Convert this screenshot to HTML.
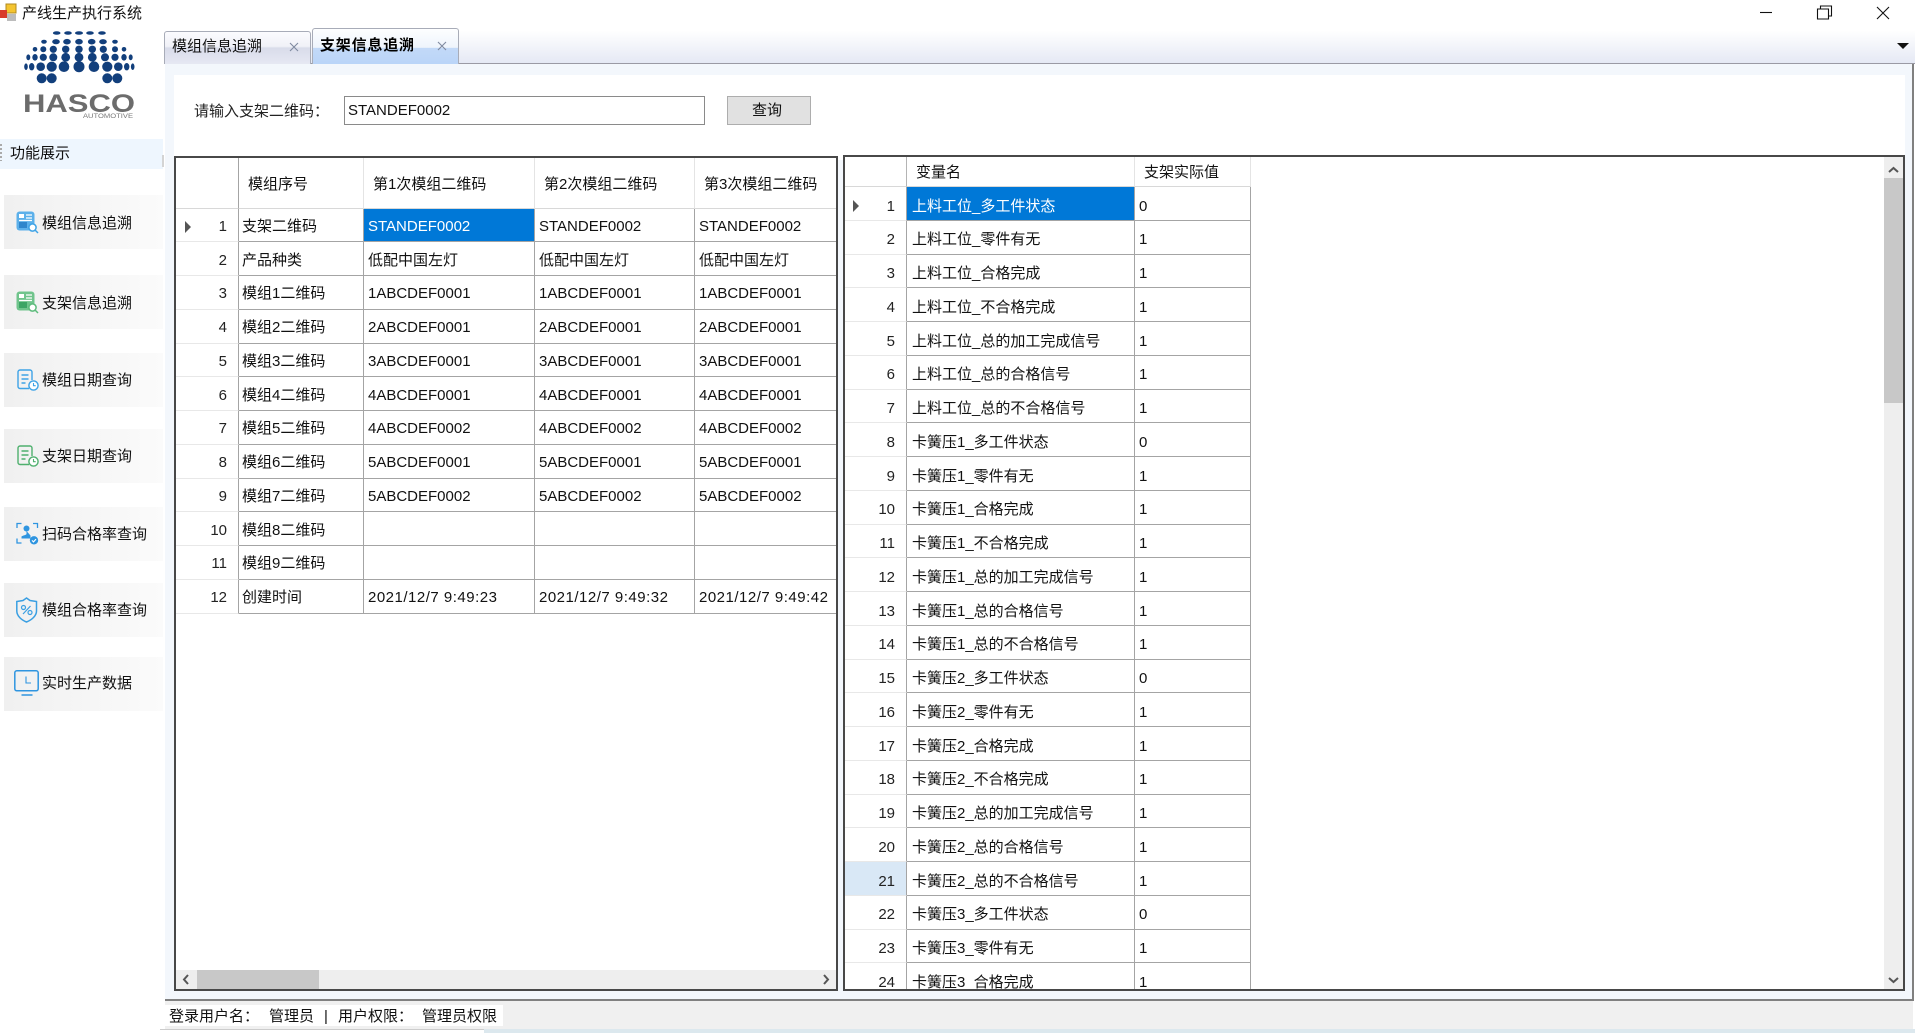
<!DOCTYPE html>
<html lang="zh"><head><meta charset="utf-8"><title>产线生产执行系统</title>
<style>
html,body{margin:0;padding:0;background:#fff;width:1915px;height:1033px;overflow:hidden}
#p{position:absolute;left:0;top:0;width:1915px;height:1033px;overflow:hidden;background:#fff;filter:blur(.35px);font:15px/20px "Liberation Sans","Noto Sans CJK SC",sans-serif;color:#111}
.a{position:absolute;white-space:nowrap}
.btn{position:absolute;left:4px;width:159px;height:54px;background:linear-gradient(90deg,#f0f0f0,#fbfbfb)}
.bt{position:absolute;left:42px;white-space:nowrap;color:#111}
.g{position:absolute;box-sizing:border-box;border:2px solid #484848;background:#fff;overflow:hidden}
.r{display:flex;box-sizing:border-box;height:33.76px;align-items:stretch}
.r>*{box-sizing:border-box;display:block;font-style:normal;font-weight:normal;flex:none;line-height:31px;white-space:nowrap;overflow:hidden;border-right:1px solid #a4a4a4;border-bottom:1px solid #a4a4a4}
.r>b{text-align:right;padding-right:11px;border-bottom-color:#e8e8e8;position:relative;background:#fff;color:#222}
.l>*{padding-top:2.4px}.q>*{padding-top:3.5px}
.q>b{padding-right:11px}
.l b{width:63px}.l i:nth-child(2){width:125px;padding-left:3px}.l i:nth-child(3){width:171px;padding-left:4px}.l i:nth-child(4){width:160px;padding-left:4px}.l i:nth-child(5){width:200px;padding-left:4px;border-right:0}
.q b{width:62px}.q i:nth-child(2){width:228px;padding-left:5px}.q i:nth-child(3){width:116px;padding-left:4px}
.s{background:#0078d7;color:#fff}
.dt i:nth-child(n+3){letter-spacing:.5px}
.h>*{border-bottom-color:#d8d8d8;border-right-color:#e4e4e4}
.l.h{height:50.5px}.l.h>*{line-height:49px;padding-top:2.4px}.l.h i:nth-child(2){padding-left:9px}.l.h i:nth-child(3),.l.h i:nth-child(4),.l.h i:nth-child(5){padding-left:9px}
.l.h b{border-right-color:#a4a4a4;border-bottom-color:#d8d8d8}
.q.h{height:30px}.q.h>*{line-height:28px;padding-top:2.4px}.q.h i:nth-child(2),.q.h i:nth-child(3){padding-left:9px}
.q.h b{border-right-color:#b4b4b4;border-bottom-color:#d8d8d8}
.tri{position:absolute;left:9px;top:12px;width:0;height:0;border-left:6px solid #555;border-top:6px solid transparent;border-bottom:6px solid transparent}
.q .tri{top:13px;left:8px}
svg{position:absolute;overflow:visible}
</style></head><body><div id="p">

<!-- title bar -->
<svg style="left:0;top:0" width="20" height="24" viewBox="0 0 20 24"><rect x="6" y="4" width="10" height="9" fill="#f4c430" stroke="#b08a20"/><rect x="7" y="14" width="9" height="7" fill="#bcbcbc"/><rect x="0" y="10" width="7" height="8" fill="#d83a2a"/></svg>
<div class="a" style="left:22px;top:4px;color:#111">产线生产执行系统</div>
<svg style="left:1755px;top:0" width="150" height="26" viewBox="0 0 150 26" fill="none" stroke="#111" stroke-width="1.1"><path d="M5 12.5H17"/><path d="M62.500 11h11v10h-11zM65.500 11V8h11v10h-3" transform="translate(0,-2)"/><path d="M122 7L134 19M134 7L122 19"/></svg>

<!-- logo -->
<svg style="left:0;top:0" width="165" height="125" viewBox="0 0 165 125" fill="#123f7c">
<ellipse cx="56.7" cy="33" rx="3.8" ry="1.8"/><ellipse cx="68" cy="33" rx="3.8" ry="1.8"/><ellipse cx="79" cy="33" rx="4" ry="1.8"/><ellipse cx="90" cy="33" rx="3.8" ry="1.8"/><ellipse cx="102" cy="33" rx="3.8" ry="1.8"/>
<ellipse cx="44" cy="41.7" rx="2.8" ry="2"/><ellipse cx="56" cy="41.7" rx="3.8" ry="2.6"/><ellipse cx="67" cy="41.7" rx="3.8" ry="2.8"/><ellipse cx="79" cy="41.7" rx="3.8" ry="2.8"/><ellipse cx="91.7" cy="41.7" rx="3.8" ry="2.8"/><ellipse cx="103" cy="41.7" rx="3.8" ry="2.6"/><ellipse cx="115" cy="41.7" rx="2.8" ry="2"/>
<circle cx="35" cy="49.3" r="2.3"/><circle cx="43.3" cy="49.3" r="3"/><circle cx="53.3" cy="49.3" r="3.6"/><circle cx="65.7" cy="49.3" r="3.7"/><circle cx="79" cy="49.3" r="3.7"/><circle cx="92.3" cy="49.3" r="3.7"/><circle cx="103.3" cy="49.3" r="3.6"/><circle cx="115" cy="49.3" r="3"/><circle cx="124" cy="49.3" r="2.3"/>
<ellipse cx="28.3" cy="57.3" rx="2" ry="2.9"/><ellipse cx="35" cy="57.3" rx="2.7" ry="3.3"/><circle cx="43.3" cy="57.3" r="3.6"/><circle cx="53.3" cy="57.3" r="4"/><circle cx="65.7" cy="57.3" r="4.4"/><circle cx="79" cy="57.3" r="4.4"/><circle cx="92.3" cy="57.3" r="4.4"/><circle cx="105" cy="57.3" r="4"/><circle cx="115" cy="57.3" r="3.6"/><ellipse cx="124" cy="57.3" rx="2.7" ry="3.3"/><ellipse cx="130.7" cy="57.3" rx="2" ry="2.9"/>
<ellipse cx="26" cy="66.7" rx="1.8" ry="3.3"/><ellipse cx="31.7" cy="66.7" rx="2.7" ry="3.7"/><circle cx="40.7" cy="66.7" r="4.3"/><circle cx="51.7" cy="66.7" r="5.1"/><circle cx="64" cy="66.7" r="5.3"/><circle cx="79" cy="66.7" r="5.5"/><circle cx="94" cy="66.7" r="5.3"/><circle cx="107.3" cy="66.7" r="5.1"/><circle cx="118.3" cy="66.7" r="4.3"/><ellipse cx="126.7" cy="66.7" rx="2.7" ry="3.7"/><ellipse cx="132.7" cy="66.7" rx="1.8" ry="3.3"/>
<circle cx="41.7" cy="78.3" r="5"/><circle cx="51.7" cy="78.3" r="5"/><circle cx="107.3" cy="78.3" r="5"/><circle cx="117.3" cy="78.3" r="5"/>
<text x="23" y="112" font-family="Liberation Sans" font-weight="bold" font-size="25" fill="#6c6c6c" textLength="112" lengthAdjust="spacingAndGlyphs">HASCO</text>
<text x="83" y="118" font-family="Liberation Sans" font-size="6" fill="#777" textLength="50" lengthAdjust="spacingAndGlyphs">AUTOMOTIVE</text>
</svg>

<!-- side menu -->
<div style="position:absolute;left:0;top:139px;width:163px;height:30px;background:#eef6fe"></div>
<div style="position:absolute;left:0;top:144px;width:2px;height:17px;background:repeating-linear-gradient(180deg,#aaa 0 2px,transparent 2px 4px)"></div>
<div style="position:absolute;left:162px;top:155px;width:2px;height:12px;background:#d4d4d4"></div>
<div class="a" style="left:10px;top:144px">功能展示</div>

<div class="btn" style="top:195px"></div><div class="bt" style="top:214px">模组信息追溯</div>
<div class="btn" style="top:275px"></div><div class="bt" style="top:294px">支架信息追溯</div>
<div class="btn" style="top:353px"></div><div class="bt" style="top:371px">模组日期查询</div>
<div class="btn" style="top:429px"></div><div class="bt" style="top:447px">支架日期查询</div>
<div class="btn" style="top:507px"></div><div class="bt" style="top:525px">扫码合格率查询</div>
<div class="btn" style="top:583px"></div><div class="bt" style="top:601px">模组合格率查询</div>
<div class="btn" style="top:657px"></div><div class="bt" style="top:674px">实时生产数据</div>

<svg style="left:16px;top:211px" width="23" height="23" viewBox="0 0 23 23"><rect x=".5" y=".5" width="18" height="19" rx="3" fill="#5cb0ea"/><rect x="3" y="3" width="5" height="4" fill="#fff"/><path d="M10 4h6M10 7h6M3 9.5h13" stroke="#fff" stroke-width="1.2"/><rect x="3" y="11" width="8" height="6" fill="#2f86cc"/><circle cx="16.5" cy="16.5" r="3.6" fill="#fff" stroke="#3ea3e6" stroke-width="1.5"/><path d="M19 19l3 3" stroke="#3ea3e6" stroke-width="1.5"/></svg>
<svg style="left:16px;top:291px" width="23" height="23" viewBox="0 0 23 23"><rect x=".5" y=".5" width="18" height="19" rx="3" fill="#70c48c"/><rect x="3" y="3" width="5" height="4" fill="#fff"/><path d="M10 4h6M10 7h6M3 9.5h13" stroke="#fff" stroke-width="1.2"/><rect x="3" y="11" width="8" height="6" fill="#3da565"/><circle cx="16.5" cy="16.5" r="3.6" fill="#fff" stroke="#5dbb7c" stroke-width="1.5"/><path d="M19 19l3 3" stroke="#5dbb7c" stroke-width="1.5"/></svg>
<svg style="left:17px;top:369px" width="22" height="22" viewBox="0 0 22 22" fill="none" stroke="#3ea3e6" stroke-width="1.4"><path d="M12 19.5H3a2 2 0 0 1-2-2V3a2 2 0 0 1 2-2h10a2 2 0 0 1 2 2v8"/><path d="M4.5 6h7M4.5 10h7M4.5 14h4"/><circle cx="16.5" cy="16.5" r="4.6" fill="#fff"/><path d="M16.5 14v2.7h2.2" stroke-width="1.1"/></svg>
<svg style="left:17px;top:445px" width="22" height="22" viewBox="0 0 22 22" fill="none" stroke="#4fb06e" stroke-width="1.4"><path d="M12 19.5H3a2 2 0 0 1-2-2V3a2 2 0 0 1 2-2h10a2 2 0 0 1 2 2v8"/><path d="M4.5 6h7M4.5 10h7M4.5 14h4"/><circle cx="16.5" cy="16.5" r="4.6" fill="#fff"/><path d="M16.5 14v2.7h2.2" stroke-width="1.1"/></svg>
<svg style="left:16px;top:522px" width="23" height="23" viewBox="0 0 23 23" fill="none" stroke="#2f95e0" stroke-width="1.3"><path d="M1 6V1.5h4.5M17 1.5h4.5V6M1 16.5V21h4.5"/><circle cx="10.5" cy="6.5" r="3" fill="#2f95e0" stroke="none"/><path d="M10.5 9v3c0 1-4 1.5-5 2.5v2h9v-3" fill="#2f95e0" stroke="none"/><circle cx="18" cy="18.3" r="4.2" fill="#2f95e0" stroke="none"/><path d="M16 18.4l1.5 1.5 2.5-2.8" stroke="#fff" stroke-width="1.1"/></svg>
<svg style="left:16px;top:597px" width="22" height="26" viewBox="0 0 22 26" fill="none" stroke="#3a9fe2" stroke-width="1.5"><path d="M10.5 1L14 3.500 20.500 4.500V14c0 5-5 9-10 11C5.500 23 .8 19 .8 14V4.500L7 3.500z"/><path d="M7 17L14.500 9" stroke-width="1.2"/><circle cx="7.500" cy="10.500" r="2" stroke-width="1.200"/><circle cx="14" cy="15.500" r="2" stroke-width="1.200"/></svg>
<svg style="left:14px;top:670px" width="25" height="26" viewBox="0 0 25 26" fill="none" stroke="#2f95e0" stroke-width="1.5"><rect x=".8" y=".8" width="23.400" height="20" rx="2"/><path d="M12 6.500v6.500h5" stroke-width="1.100"/><path d="M7.500 25h11"/></svg>

<!-- tab strip -->
<div style="position:absolute;left:165px;top:30px;width:1750px;height:34px;background:linear-gradient(180deg,#fff,#e4e8f4)"></div>
<div style="position:absolute;left:165px;top:63px;width:1750px;height:1px;background:#9a9aa4"></div>
<div style="position:absolute;box-sizing:border-box;left:164px;top:31px;width:147px;height:33px;border:1px solid #a8acb8;border-bottom:0;border-radius:3px 3px 0 0;background:linear-gradient(180deg,#fbfbfe 0,#f0f1f7 45%,#d9dcea 50%,#e6e8f3 100%)"></div>
<div style="position:absolute;box-sizing:border-box;left:312px;top:28px;width:147px;height:38px;border:1px solid #a8acb8;border-bottom:0;border-radius:3px 3px 0 0;background:linear-gradient(180deg,#fdfeff 0,#eef4fc 50%,#c2d9f8 52%,#b9d4f8 100%)"></div>
<div class="a" style="left:172px;top:37px;color:#111">模组信息追溯</div>
<div class="a" style="left:320px;top:36px;color:#000;font-weight:bold;letter-spacing:.8px">支架信息追溯</div>
<svg style="left:288px;top:40px" width="170" height="14" viewBox="0 0 170 14" fill="none" stroke="#7f8aa0" stroke-width="1.1"><path d="M2 3l8 8M10 3L2 11"/><path d="M150 2l8 8M158 2l-8 8"/></svg>
<div style="position:absolute;left:1897px;top:43px;width:0;height:0;border-left:6px solid transparent;border-right:6px solid transparent;border-top:6px solid #111"></div>

<!-- tab panel -->
<div style="position:absolute;left:165px;top:64px;width:1749px;height:937px;background:#f3f7fc"></div>
<div style="position:absolute;left:1912px;top:64px;width:2px;height:937px;background:#808080"></div>
<div style="position:absolute;left:165px;top:999px;width:1749px;height:2px;background:#808080"></div>
<div style="position:absolute;left:174px;top:75px;width:1731px;height:85px;background:#fff"></div>

<div class="a" style="left:194px;top:102px;color:#222">请输入支架二维码：</div>
<div class="a" style="left:344px;top:96px;width:361px;height:29px;box-sizing:border-box;border:1px solid #8a8a8a;background:#fff;padding-left:3px;line-height:27px">STANDEF0002</div>
<div class="a" style="left:727px;top:96px;width:84px;height:29px;box-sizing:border-box;border:1px solid #adadad;background:#e1e1e1;text-align:center;line-height:27px;padding-right:4px">查询</div>

<!-- left grid -->
<div class="g" style="left:174px;top:156px;width:664px;height:835px">
<div class="r l h"><b></b><i>模组序号</i><i>第1次模组二维码</i><i>第2次模组二维码</i><i>第3次模组二维码</i></div>
<div class="r l"><b>1<span class="tri"></span></b><i>支架二维码</i><i class="s">STANDEF0002</i><i>STANDEF0002</i><i>STANDEF0002</i></div>
<div class="r l"><b>2</b><i>产品种类</i><i>低配中国左灯</i><i>低配中国左灯</i><i>低配中国左灯</i></div>
<div class="r l"><b>3</b><i>模组1二维码</i><i>1ABCDEF0001</i><i>1ABCDEF0001</i><i>1ABCDEF0001</i></div>
<div class="r l"><b>4</b><i>模组2二维码</i><i>2ABCDEF0001</i><i>2ABCDEF0001</i><i>2ABCDEF0001</i></div>
<div class="r l"><b>5</b><i>模组3二维码</i><i>3ABCDEF0001</i><i>3ABCDEF0001</i><i>3ABCDEF0001</i></div>
<div class="r l"><b>6</b><i>模组4二维码</i><i>4ABCDEF0001</i><i>4ABCDEF0001</i><i>4ABCDEF0001</i></div>
<div class="r l"><b>7</b><i>模组5二维码</i><i>4ABCDEF0002</i><i>4ABCDEF0002</i><i>4ABCDEF0002</i></div>
<div class="r l"><b>8</b><i>模组6二维码</i><i>5ABCDEF0001</i><i>5ABCDEF0001</i><i>5ABCDEF0001</i></div>
<div class="r l"><b>9</b><i>模组7二维码</i><i>5ABCDEF0002</i><i>5ABCDEF0002</i><i>5ABCDEF0002</i></div>
<div class="r l"><b>10</b><i>模组8二维码</i><i></i><i></i><i></i></div>
<div class="r l"><b>11</b><i>模组9二维码</i><i></i><i></i><i></i></div>
<div class="r l dt"><b>12</b><i>创建时间</i><i>2021/12/7 9:49:23</i><i>2021/12/7 9:49:32</i><i>2021/12/7 9:49:42</i></div>
<div style="position:absolute;left:0;bottom:0;width:660px;height:19px;background:#eee"></div>
<div style="position:absolute;left:21px;bottom:0;width:122px;height:19px;background:#c8c8c8"></div>
<svg style="left:0;bottom:0" width="660" height="19" viewBox="0 0 660 19" fill="none" stroke="#555" stroke-width="2"><path d="M12 5l-4 4.500 4 4.500"/><path d="M648 5l4 4.500-4 4.500"/></svg>
</div>

<!-- right grid -->
<div class="g" style="left:843px;top:155px;width:1062px;height:836px">
<div class="r q h"><b></b><i>变量名</i><i>支架实际值</i></div>
<div class="r q"><b>1<span class="tri"></span></b><i class="s">上料工位_多工件状态</i><i>0</i></div>
<div class="r q"><b>2</b><i>上料工位_零件有无</i><i>1</i></div>
<div class="r q"><b>3</b><i>上料工位_合格完成</i><i>1</i></div>
<div class="r q"><b>4</b><i>上料工位_不合格完成</i><i>1</i></div>
<div class="r q"><b>5</b><i>上料工位_总的加工完成信号</i><i>1</i></div>
<div class="r q"><b>6</b><i>上料工位_总的合格信号</i><i>1</i></div>
<div class="r q"><b>7</b><i>上料工位_总的不合格信号</i><i>1</i></div>
<div class="r q"><b>8</b><i>卡簧压1_多工件状态</i><i>0</i></div>
<div class="r q"><b>9</b><i>卡簧压1_零件有无</i><i>1</i></div>
<div class="r q"><b>10</b><i>卡簧压1_合格完成</i><i>1</i></div>
<div class="r q"><b>11</b><i>卡簧压1_不合格完成</i><i>1</i></div>
<div class="r q"><b>12</b><i>卡簧压1_总的加工完成信号</i><i>1</i></div>
<div class="r q"><b>13</b><i>卡簧压1_总的合格信号</i><i>1</i></div>
<div class="r q"><b>14</b><i>卡簧压1_总的不合格信号</i><i>1</i></div>
<div class="r q"><b>15</b><i>卡簧压2_多工件状态</i><i>0</i></div>
<div class="r q"><b>16</b><i>卡簧压2_零件有无</i><i>1</i></div>
<div class="r q"><b>17</b><i>卡簧压2_合格完成</i><i>1</i></div>
<div class="r q"><b>18</b><i>卡簧压2_不合格完成</i><i>1</i></div>
<div class="r q"><b>19</b><i>卡簧压2_总的加工完成信号</i><i>1</i></div>
<div class="r q"><b>20</b><i>卡簧压2_总的合格信号</i><i>1</i></div>
<div class="r q"><b style="background:#d9e8f6">21</b><i>卡簧压2_总的不合格信号</i><i>1</i></div>
<div class="r q"><b>22</b><i>卡簧压3_多工件状态</i><i>0</i></div>
<div class="r q"><b>23</b><i>卡簧压3_零件有无</i><i>1</i></div>
<div class="r q"><b>24</b><i>卡簧压3_合格完成</i><i>1</i></div>
<div style="position:absolute;right:0;top:0;width:19px;height:832px;background:#eee"></div>
<div style="position:absolute;right:0;top:21px;width:19px;height:225px;background:#c8c8c8"></div>
<svg style="right:0;top:0" width="19" height="832" viewBox="0 0 19 832" fill="none" stroke="#555" stroke-width="2"><path d="M5 15l4.500-4 4.500 4"/><path d="M5 821l4.500 4 4.500-4"/></svg>
</div>

<!-- status bar -->
<div style="position:absolute;left:165px;top:1001px;width:1748px;height:28px;background:#f0f0f0"></div>
<div style="position:absolute;left:165px;top:1005px;width:338px;height:21px;background:#fff"></div>
<div class="a" style="left:169px;top:1007px">登录用户名：</div>
<div class="a" style="left:269px;top:1007px">管理员</div>
<div class="a" style="left:324px;top:1007px">|</div>
<div class="a" style="left:338px;top:1007px">用户权限：</div>
<div class="a" style="left:422px;top:1007px">管理员权限</div>
<div style="position:absolute;left:160px;top:1029px;width:324px;height:1px;background:#ccc"></div>
<div style="position:absolute;left:484px;top:1029px;width:1431px;height:4px;background:#dce8ee"></div>

</div></body></html>
